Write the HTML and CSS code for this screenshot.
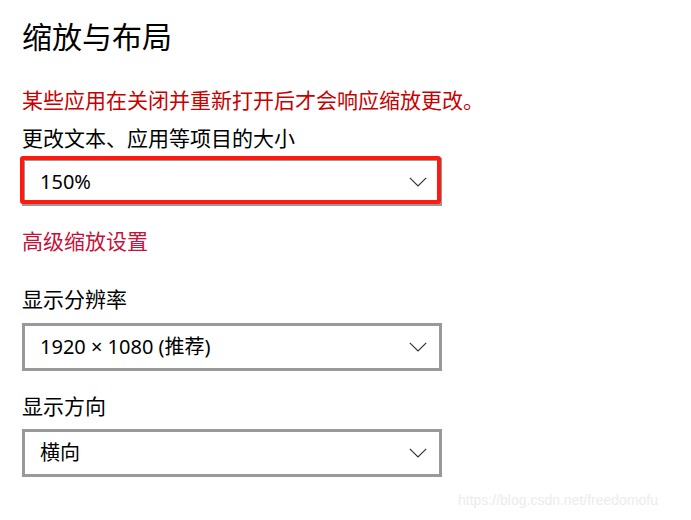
FILE: index.html
```html
<!DOCTYPE html>
<html lang="zh-CN">
<head>
<meta charset="utf-8">
<title>缩放与布局</title>
<link rel="stylesheet" href="styles.css">
</head>
<body>
<main class="page">
  <h1 class="title">缩放与布局</h1>
  <p class="warning">某些应用在关闭并重新打开后才会响应缩放更改。</p>
  <p class="label label-first">更改文本、应用等项目的大小</p>
  <div class="select select-scale">
    <span class="select-text">150%</span>
    <svg class="chevron" width="18" height="10" viewBox="0 0 18 10"><polyline points="0.8,0.8 9,9 17.2,0.8" fill="none" stroke="#333" stroke-width="1.2"/></svg>
    <span class="annotation"></span>
  </div>
  <p class="link">高级缩放设置</p>
  <p class="label label-res">显示分辨率</p>
  <div class="select select-res">
    <span class="select-text">1920 × 1080 (推荐)</span>
    <svg class="chevron" width="18" height="10" viewBox="0 0 18 10"><polyline points="0.8,0.8 9,9 17.2,0.8" fill="none" stroke="#333" stroke-width="1.2"/></svg>
  </div>
  <p class="label label-dir">显示方向</p>
  <div class="select select-dir">
    <span class="select-text">横向</span>
    <svg class="chevron" width="18" height="10" viewBox="0 0 18 10"><polyline points="0.8,0.8 9,9 17.2,0.8" fill="none" stroke="#333" stroke-width="1.2"/></svg>
  </div>
</main>
<div class="watermark">https://blog.csdn.net/freedomofu</div>
</body>
</html>
```
FILE: styles.css
```css
html, body {
  margin: 0;
  padding: 0;
  background: #ffffff;
}
body {
  width: 691px;
  height: 520px;
  position: relative;
  overflow: hidden;
  font-family: "Noto Sans CJK SC", "Noto Sans", sans-serif;
  color: #000000;
}
.page {
  padding: 15px 0 0 22px;
  display: flex;
  flex-direction: column;
  align-items: flex-start;
}
.title {
  margin: 0;
  font-size: 30px;
  font-weight: 400;
  line-height: 40px;
  height: 40px;
}
p {
  margin: 0;
  font-size: 21px;
  line-height: 30px;
  height: 30px;
}
.warning {
  margin-top: 29px;
  color: #c80000;
}
.label-first {
  margin-top: 8px;
}
.select {
  position: relative;
  box-sizing: border-box;
  width: 420px;
  height: 48px;
  border: 3px solid #999999;
  background: #fff;
  display: flex;
  align-items: center;
  justify-content: space-between;
  padding: 0 12px 0 15px;
}
.select-scale {
  margin-top: 6px;
}
.select-text {
  font-family: "Noto Sans", "Noto Sans CJK SC", sans-serif;
  font-size: 20px;
  line-height: 30px;
  color: #000;
}
.chevron {
  display: block;
}
.annotation {
  position: absolute;
  left: -5px;
  top: -5px;
  width: 421px;
  height: 48px;
  box-sizing: border-box;
  border: 4px solid #ff1a10;
  border-radius: 3px;
}
.link {
  margin-top: 19px;
  color: #c8103a;
}
.label-res {
  margin-top: 28px;
}
.select-res {
  margin-top: 10px;
}
.label-dir {
  margin-top: 19px;
}
.select-dir {
  margin-top: 9px;
}
.watermark {
  position: absolute;
  left: 458px;
  top: 490px;
  font-family: "Liberation Sans", Arial, sans-serif;
  font-size: 14px;
  line-height: 20px;
  color: #ececec;
  white-space: nowrap;
}
```
